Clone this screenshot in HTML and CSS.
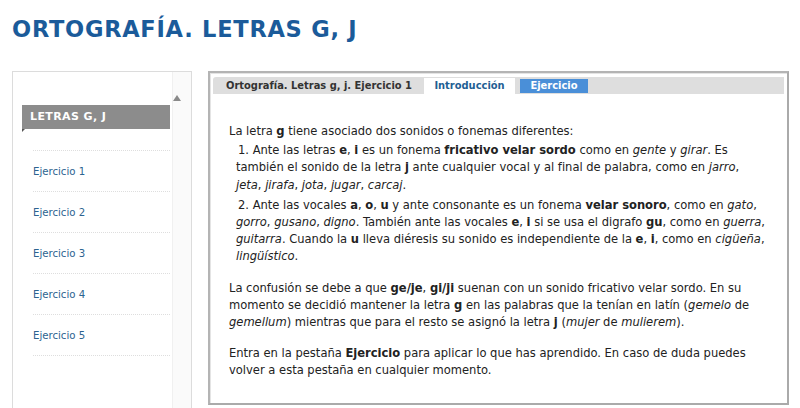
FILE: index.html
```html
<!DOCTYPE html>
<html lang="es">
<head>
<meta charset="utf-8">
<title>Ortografía. Letras g, j</title>
<link rel="stylesheet" href="styles.css">
</head>
<body>
<h1 class="title">ORTOGRAFÍA. LETRAS G, J</h1>
<div class="main">
  <aside class="side">
    <div class="side-inner">
      <div class="scroll-up"></div>
      <div class="side-head">LETRAS G, J</div>
      <ul class="side-list">
        <li><a href="#">Ejercicio 1</a></li>
        <li><a href="#">Ejercicio 2</a></li>
        <li><a href="#">Ejercicio 3</a></li>
        <li><a href="#">Ejercicio 4</a></li>
        <li><a href="#">Ejercicio 5</a></li>
      </ul>
    </div>
    <div class="side-track"></div>
  </aside>
  <section class="panel">
    <div class="tabs">
      <span class="tab-title">Ortografía. Letras g, j. Ejercicio 1</span>
      <span class="tab tab-active">Introducción</span>
      <span class="tab tab-blue">Ejercicio</span>
    </div>
    <div class="content">
      <p>La letra <b>g</b> tiene asociado dos sonidos o fonemas diferentes:</p>
      <ol class="items">
        <li>Ante las letras <b>e</b>, <b>i</b> es un fonema <b>fricativo velar sordo</b> como en <i>gente</i> y <i>girar</i>. Es también el sonido de la letra <b>j</b> ante cualquier vocal y al final de palabra, como en <i>jarro</i>, <i>jeta</i>, <i>jirafa</i>, <i>jota</i>, <i>jugar</i>, <i>carcaj</i>.</li>
        <li>Ante las vocales <b>a</b>, <b>o</b>, <b>u</b> y ante consonante es un fonema <b>velar sonoro</b>, como en <i>gato</i>, <i>gorro</i>, <i>gusano</i>, <i>digno</i>. También ante las vocales <b>e</b>, <b>i</b> si se usa el digrafo <b>gu</b>, como en <i>guerra</i>, <i>guitarra</i>. Cuando la <b>u</b> lleva diéresis su sonido es independiente de la <b>e</b>, <b>i</b>, como en <i>cigüeña</i>, <i>lingüístico</i>.</li>
      </ol>
      <p class="gap">La confusión se debe a que <b>ge/je</b>, <b>gi/ji</b> suenan con un sonido fricativo velar sordo. En su momento se decidió mantener la letra <b>g</b> en las palabras que la tenían en latín (<i>gemelo</i> de <i>gemellum</i>) mientras que para el resto se asignó la letra <b>j</b> (<i>mujer</i> de <i>mulierem</i>).</p>
      <p class="gap">Entra en la pestaña <b>Ejercicio</b> para aplicar lo que has aprendido. En caso de duda puedes volver a esta pestaña en cualquier momento.</p>
    </div>
  </section>
</div>
</body>
</html>
```
FILE: styles.css
```css
html, body {
  margin: 0;
  padding: 0;
  background: #ffffff;
  overflow: hidden;
}
body {
  width: 800px;
  height: 408px;
  font-family: "DejaVu Sans Condensed", "DejaVu Sans", sans-serif;
  color: #222;
}
.title {
  margin: 0;
  padding: 15px 0 0 12px;
  height: 58px;
  box-sizing: border-box;
  font-family: "DejaVu Sans", sans-serif;
  font-weight: bold;
  font-size: 22.5px;
  letter-spacing: 0.75px;
  line-height: 28px;
  color: #1b5b9a;
}
.main {
  display: flex;
  gap: 16px;
  padding-left: 12px;
  padding-top: 13px;
}
.side {
  width: 178px;
  height: 340px;
  border: 1px solid #dcdcdc;
  display: flex;
  flex-shrink: 0;
}
.side-inner {
  width: 159px;
  position: relative;
  padding-top: 33px;
}
.side-track {
  flex: 1;
  background: #fafafa;
  border-left: 1px solid #f0f0f0;
}
.scroll-up {
  position: absolute;
  right: -9px;
  top: 23px;
  width: 0;
  height: 0;
  border-left: 4px solid transparent;
  border-right: 4px solid transparent;
  border-bottom: 6px solid #8a8a8a;
}
.side-head {
  margin-left: 9px;
  width: 148px;
  height: 24px;
  box-sizing: border-box;
  background: #8c8c8c;
  color: #fff;
  font-family: "DejaVu Sans", sans-serif;
  font-weight: bold;
  font-size: 11px;
  letter-spacing: 0.4px;
  line-height: 24px;
  padding-left: 8px;
  position: relative;
}
.side-head::after {
  content: "";
  position: absolute;
  left: 0;
  bottom: -3px;
  border-top: 3px solid #555;
  border-right: 3px solid transparent;
}
.side-list {
  list-style: none;
  margin: 21px 0 0 20px;
  padding: 0;
  width: 137px;
  border-top: 1px dotted #dedede;
}
.side-list li {
  height: 40px;
  border-bottom: 1px dotted #dedede;
  display: flex;
  align-items: center;
}
.side-list a {
  color: #2c6390;
  text-decoration: none;
  font-size: 11.3px;
  padding-top: 1px;
}
.panel {
  width: 577px;
  height: 330px;
  border: 2px solid #b4b4b4;
  border-right-color: #aaa;
  border-bottom-color: #aaa;
  box-shadow: inset 1px 1px 0 #e4e4e4;
  display: flex;
  flex-direction: column;
  flex-shrink: 0;
}
.tabs {
  margin: 4px 3px 0 3px;
  height: 17px;
  background: #dedede;
  border-radius: 3px 0 0 0;
  display: flex;
  align-items: flex-end;
  font-size: 11px;
  font-weight: bold;
}
.tab-title {
  color: #333;
  padding-left: 13px;
  width: 198px;
  line-height: 17px;
  align-self: center;
}
.tab {
  height: 16px;
  line-height: 16px;
  text-align: center;
}
.tab-active {
  background: #fff;
  color: #1f5f94;
  width: 91px;
  height: 17px;
  margin-bottom: -1px;
}
.tab-blue {
  background: #4a8fd8;
  color: #fff;
  width: 68px;
  height: 14px;
  line-height: 14px;
  margin-left: 5px;
  margin-bottom: 1px;
}
.content {
  padding: 28px 6px 0 19px;
  font-size: 12.8px;
  line-height: 17.2px;
  color: #222;
}
.content p {
  margin: 0;
}
.content p.gap {
  margin-top: 14px;
}
.items {
  margin: 2px 0 0 0;
  padding: 0 15.5px 0 7px;
  list-style: none;
  counter-reset: item;
}
.items li {
  margin-bottom: 3px;
  counter-increment: item;
}
.items li::before {
  content: counter(item) ". ";
  padding-left: 2px;
}
```
